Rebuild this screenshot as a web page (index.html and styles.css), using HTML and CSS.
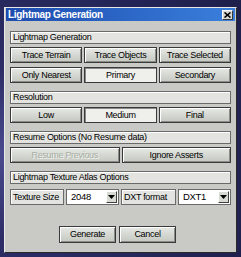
FILE: index.html
```html
<!DOCTYPE html>
<html>
<head>
<meta charset="utf-8">
<link rel="stylesheet" href="styles.css">
</head>
<body>
<div class="window">
  <div class="titlebar">
    <span class="title">Lightmap Generation</span>
    <span class="close"><svg width="7" height="6" viewBox="0 0 7 6"><path d="M0.5 0.5 L6.5 5.5 M6.5 0.5 L0.5 5.5" stroke="#000" stroke-width="1.6"/></svg></span>
  </div>
  <div class="content">
    <div class="section">
      <div class="label">Lightmap Generation</div>
      <div class="row">
        <div class="btn">Trace Terrain</div>
        <div class="btn">Trace Objects</div>
        <div class="btn">Trace Selected</div>
      </div>
      <div class="row row-gap">
        <div class="btn">Only Nearest</div>
        <div class="btn pressed">Primary</div>
        <div class="btn">Secondary</div>
      </div>
    </div>
    <div class="section">
      <div class="label">Resolution</div>
      <div class="row">
        <div class="btn">Low</div>
        <div class="btn pressed">Medium</div>
        <div class="btn">Final</div>
      </div>
    </div>
    <div class="section">
      <div class="label">Resume Options (No Resume data)</div>
      <div class="row two">
        <div class="btn disabled">Resume Previous</div>
        <div class="btn">Ignore Asserts</div>
      </div>
    </div>
    <div class="section">
      <div class="label">Lightmap Texture Atlas Options</div>
      <div class="row atlas">
        <div class="field">Texture Size</div>
        <div class="select"><span class="value">2048</span><span class="arrow"><svg width="7" height="4" viewBox="0 0 7 4"><path d="M0 0 H7 L3.5 4 Z" fill="#000"/></svg></span></div>
        <div class="field">DXT format</div>
        <div class="select"><span class="value">DXT1</span><span class="arrow"><svg width="7" height="4" viewBox="0 0 7 4"><path d="M0 0 H7 L3.5 4 Z" fill="#000"/></svg></span></div>
      </div>
    </div>
    <div class="footer">
      <div class="btn action">Generate</div>
      <div class="btn action">Cancel</div>
    </div>
  </div>
</div>
</body>
</html>
```
FILE: styles.css
```css
* { box-sizing: border-box; }

body {
  margin: 0;
  width: 241px;
  height: 257px;
  overflow: hidden;
  background: radial-gradient(circle at 0 60%, #4a4a8e 0, #2c2d66 30%, #1e1f4a 100%);
  font-family: "Liberation Sans", Arial, sans-serif;
  font-size: 9px;
  letter-spacing: -0.3px;
  color: #000;
}

.window {
  margin: 7px 0 0 4px;
  width: 233px;
  height: 246px;
  background: #c9cac6;
  border: 1px solid;
  border-color: #e8e8e8 #2a2a2a #2a2a2a #e8e8e8;
  padding: 0 1px 1px;
  display: flex;
  flex-direction: column;
}

.titlebar {
  height: 13px;
  background: linear-gradient(90deg, #1d4cae, #3a7fdc);
  display: flex;
  align-items: center;
  justify-content: space-between;
  padding: 0 2px 0 2px;
  color: #fff;
  font-weight: bold;
  font-size: 10px;
}

.close {
  width: 11px;
  height: 10px;
  background: #d8d8d2;
  border: 1px solid;
  border-color: #ffffff #3a3a3a #3a3a3a #ffffff;
  display: flex;
  align-items: center;
  justify-content: center;
}

.content {
  flex: 1;
  display: flex;
  flex-direction: column;
  padding: 10px 4px 8px 4px;
}

.section {
  display: flex;
  flex-direction: column;
  gap: 3px;
  margin-bottom: 8px;
}

.label {
  height: 13px;
  border: 1px solid #6a6a6a;
  background: #e3e4e0;
  box-shadow: inset 1px 1px #ffffff;
  padding-left: 2px;
  line-height: 11px;
}

.row {
  display: grid;
  grid-template-columns: 1fr 1fr 1fr;
  gap: 2px;
  height: 16px;
}

.row-gap { margin-top: 1px; }

.row.two { grid-template-columns: 1fr 1fr; }

.row.atlas {
  grid-template-columns: 54px 53px 55px 53px;
  height: 16px;
  margin-top: 2px;
}

.btn {
  border: 1px solid #3a3a3a;
  background: linear-gradient(#e6e8e4, #c4c8c0);
  box-shadow: inset 1px 1px #ffffff, inset -1px -1px #8a8c88;
  text-align: center;
  line-height: 14px;
  white-space: nowrap;
}

.btn.pressed {
  background: #efefec;
  box-shadow: inset 1px 1px #8a8a8a;
}

.btn.disabled {
  color: #a6aea2;
  text-shadow: 1px 1px #f4f4f4;
}

.field {
  border: 1px solid #6a6a6a;
  background: #e3e4e0;
  box-shadow: inset 1px 1px #ffffff;
  padding-left: 2px;
  line-height: 14px;
}

.select {
  border: 1px solid #6a6a6a;
  background: #ffffff;
  display: flex;
  align-items: stretch;
  justify-content: space-between;
  padding: 1px;
}

.value {
  padding-left: 3px;
  line-height: 12px;
  font-size: 9.5px;
}

.arrow {
  width: 11px;
  background: #d8dad4;
  border: 1px solid;
  border-color: #ffffff #404040 #404040 #ffffff;
  display: flex;
  align-items: center;
  justify-content: center;
}

.footer {
  margin-top: auto;
  display: flex;
  justify-content: center;
  gap: 3px;
  padding-right: 6px;
}

.btn.action {
  width: 57px;
  height: 17px;
  line-height: 15px;
}
```
